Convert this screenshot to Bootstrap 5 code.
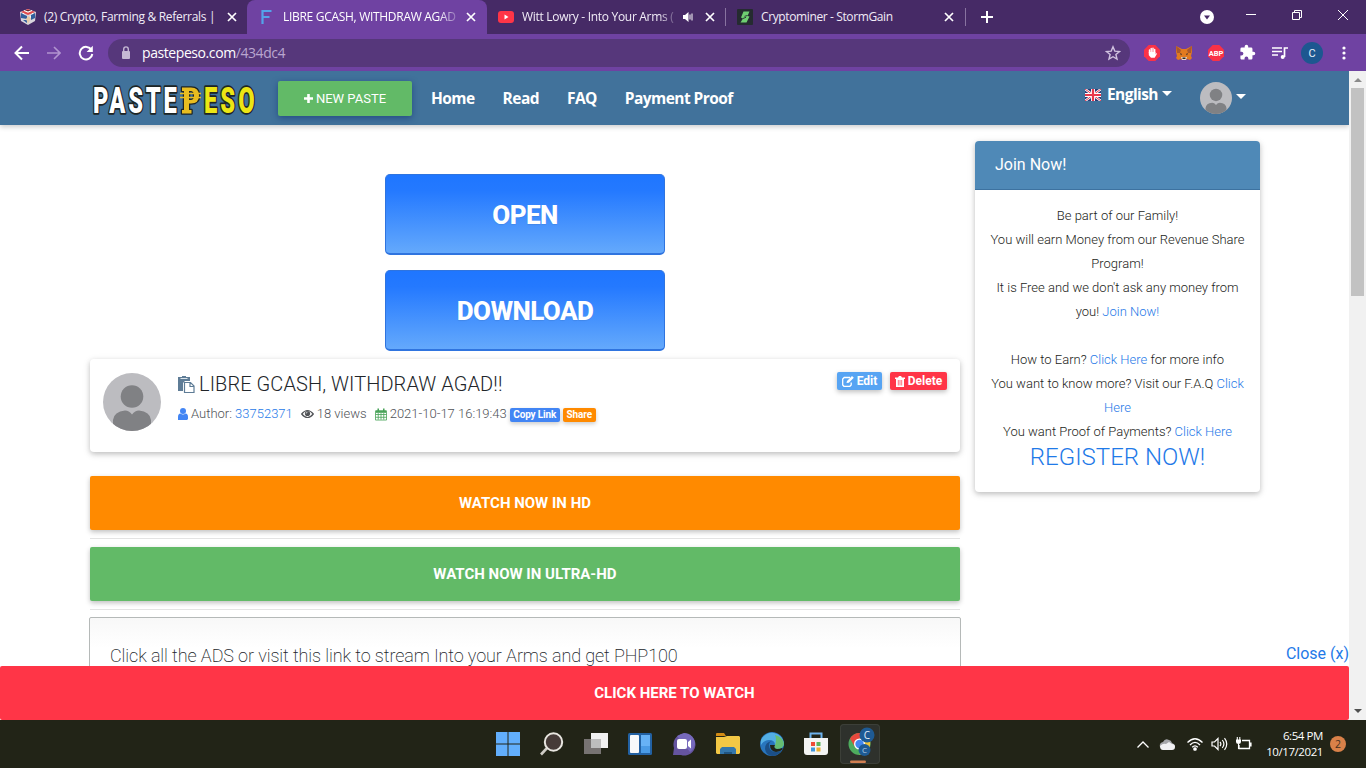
<!DOCTYPE html>
<html lang="en">
<head>
  <meta charset="UTF-8" />
  <meta name="viewport" content="width=device-width, initial-scale=1.0"/>
  <title>LIBRE GCASH, WITHDRAW AGAD!! - PastePeso</title>
  <link href="https://cdn.jsdelivr.net/npm/bootstrap@5.3.2/dist/css/bootstrap.min.css" rel="stylesheet">
  <style>
    body {
      height: 768px;
      font-family: Roboto, "Liberation Sans", sans-serif;
      color: #212529;
      line-height: 1.5;
    }
    svg { display: block; flex: none; }
    a { color: #1f7ae8; text-decoration: none; }
    .ui-font { font-family: "Open Sans", "Noto Sans", sans-serif; }

    /* browser window */
    .titlebar { height: 34px; background: #462a66; color: #f1ecf7; font-size: 12px; }
    .tab { height: 34px; padding-left: 20px; }
    .tab span { margin-left: 8px; line-height: 34px; letter-spacing: -.3px; }
    .tab-fade { -webkit-mask-image: linear-gradient(90deg, #000 90%, rgba(0,0,0,.25)); mask-image: linear-gradient(90deg, #000 90%, rgba(0,0,0,.25)); }
    .tab.current { background: #6f42a2; color: #fff; border-radius: 8px 8px 0 0; }
    .tab.current span { letter-spacing: -.3px; }
    .tab-line { width: 1px; height: 18px; background: #8873a0; }
    .win-btn { width: 46px; height: 29px; }
    .toolbar { height: 37px; background: #6f42a2; padding: 0 6px; }
    .tool-cell { width: 32px; height: 35px; }
    .address { width: 1022px; height: 28px; background: #56377b; border-radius: 14px; margin-left: 6px; padding: 0 9px 0 10px; color: #fff; font-size: 14px; letter-spacing: -.42px; }
    .address .path { color: #b9a6cf; }

    /* page */
    .viewport { height: 649px; }
    .page { width: 1349px; background: #fff; }
    .site-nav { height: 54px; background: #41729b; padding: 0 0 0 92px; box-shadow: 0 2px 5px rgba(0,0,0,.2); position: relative; z-index: 2; }
    .site-logo { overflow: visible; }
    .btn-paste { width: 134px; height: 35px; margin: 1px 19px 0 22px; background: #62ba67; color: #fff; font-size: 13px; border-radius: 2px; box-shadow: 0 2px 6px rgba(10,40,110,.5); }
    .site-nav .menu-item { color: #fff; font-weight: 700; font-size: 15.5px; letter-spacing: -.56px; margin: 2px 28px 0 0; }
    .caret { border: 5px solid transparent; border-top-color: #fff; border-bottom: 0; }
    .big-btn { width: 280px; height: 81px; border: 1px solid #2f74df; border-bottom-width: 2px; border-radius: 5px; background: linear-gradient(#1f76ff, #2479ff 20%, #64a9fc); color: #fff; font-weight: 800; font-size: 26px; letter-spacing: -.6px; text-shadow: 0 1px 1px rgba(0,0,0,.08); padding-top: 2px; }
    .main-col { width: 870px; padding-top: 49px; }
    .soft { box-shadow: 0 2px 5px rgba(0,0,0,.18), 0 2px 8px rgba(0,0,0,.1); border-radius: 4px; }
    .paste-head { height: 93px; margin-top: 8px; padding: 13px 13px 0 13px; }
    .paste-title { font-size: 20px; font-weight: 350; line-height: 24px; letter-spacing: .08px; }
    .meta { font-size: 13px; font-weight: 300; color: #505357; line-height: 18px; margin-top: 9px; }
    .tag { height: 14px; line-height: 14px; font-size: 10px; font-weight: 700; color: #fff; border-radius: 2px; box-shadow: 0 2px 4px rgba(0,0,0,.2); letter-spacing: -.15px; }
    .act { height: 18px; font-size: 12px; font-weight: 700; color: #fff; border-radius: 2px; box-shadow: 0 2px 5px rgba(0,0,0,.25); }
    .bg-edit { background: #57a4f3; }
    .bg-del { background: #ff3547; }
    .bg-blue { background: #4285f4; }
    .bg-orange { background: #ff8a00; }
    .bg-green { background: #62ba67; }
    .wide-btn { height: 54px; color: #fff; font-size: 15px; font-weight: 700; border-radius: 2px; box-shadow: 0 2px 5px rgba(0,0,0,.25); }
    .rule { height: 1px; background: #e3e3e3; margin: 8px 0; }
    .content-box { height: 120px; margin: -1px -1px 0; border: 1px solid #b5b9b8; border-radius: 2px; background: linear-gradient(#f8f8f8, #fff 30px); padding: 24px 20px; font-size: 18px; font-weight: 200; letter-spacing: -.1px; }
    .side-col { width: 285px; margin-top: 16px; height: 351px; }
    .side-head { height: 49px; background: #4f89b7; border-bottom: 1px solid #3d72a0; border-radius: 4px 4px 0 0; color: #fff; font-size: 16px; padding: 12px 20px 0; }
    .side-text { font-size: 13px; line-height: 24px; padding-top: 14px; font-weight: 300; color: #1b1d20; }
    .side-text a { font-weight: 350; }
    .register { font-size: 24px; line-height: 28px; margin-top: -1px; }
    .close-link { right: 0; bottom: 53px; font-size: 16px; line-height: 26px; }
    .watch-bar { left: 0; bottom: 0; width: 1349px; height: 54px; background: #ff3547; color: #fff; font-size: 15px; font-weight: 700; border-radius: 2px; }
    .scroller { width: 17px; background: #f1f1f1; }
    .scroller .thumb { width: 13px; height: 208px; background: #c2c2c2; }
    .scroller .arrow-cell { height: 17px; }

    /* taskbar */
    .taskbar { height: 48px; background: #222417; }
    .task-icons { margin-left: 486px; }
    .task-icons > div { width: 44px; height: 48px; }
    .chrome-cell { background: #2e312c; border-radius: 4px; box-shadow: inset 0 0 0 1px #3c3f38; height: 40px !important; width: 40px !important; margin: 4px 0 0 2px; }
    .tray { padding-right: 20px; color: #fff; }
    .clock { font-size: 11.5px; line-height: 16px; width: 62px; letter-spacing: -.42px; margin-right: 7px; }
  </style>
</head>
<body class="d-flex flex-column overflow-hidden">

  <!-- SHARED ICONS -->
  <svg width="0" height="0" class="position-absolute">
    <symbol id="x" viewBox="0 0 10 10"><path d="M1 1l8 8M9 1L1 9" stroke="#fff" stroke-width="1.7"/></symbol>
    <symbol id="avatar" viewBox="0 0 58 58">
      <clipPath id="round"><circle cx="29" cy="29" r="29"/></clipPath>
      <g clip-path="url(#round)">
        <rect width="58" height="58" fill="#bcbcc0"/>
        <circle cx="29" cy="23.500" r="11.300" fill="#808184"/>
        <path d="M10 58V47q1-8.500 12-9.500 4 0 7 4 3-4 7-4 11 1 12 9.500v11z" fill="#808184"/>
      </g>
    </symbol>
  </svg>

  <!-- TAB STRIP -->
  <div class="titlebar ui-font d-flex flex-shrink-0 align-items-center">
    <div class="tab d-flex align-items-center" style="width:247px">
      <svg width="16" height="16" viewBox="0 0 16 16"><path d="M8 0l8 3-1 9-7 4-7-4L0 3z" fill="#d9d5dd"/><path d="M8 0l7 3-7 3-7-3z" fill="#e04a4c"/><path d="M4 1.500L8 3l4-1.500M3 4l3 5M13 4l-3 5" stroke="#fff" stroke-width="1.200"/><path d="M1 4l6 3v3L1 9zm14 0l-4 2v5l4-2zM3 11l4 3v-3z" fill="#315f9d"/><path d="M8 7l3 2-3 6-2-5z" fill="#e6c9a6"/></svg>
      <span class="text-nowrap">(2) Crypto, Farming &amp; Referrals |</span>
      <svg class="ms-auto" width="10" height="10" style="margin-right:10px"><use href="#x"/></svg>
    </div>
    <div class="tab current d-flex align-items-center" style="width:240px;padding-left:12px">
      <svg width="16" height="16" viewBox="0 0 16 16"><path d="M3.500 15V2h9M3.500 8h7" stroke="#54a3ea" stroke-width="2.200" fill="none"/></svg>
      <span class="text-nowrap tab-fade">LIBRE GCASH, WITHDRAW AGAD</span>
      <svg class="ms-auto" width="10" height="10" style="margin-right:11px"><use href="#x"/></svg>
    </div>
    <div class="tab d-flex align-items-center" style="width:238px;padding-left:11px">
      <svg width="16" height="16" viewBox="0 0 16 16"><rect y="2" width="16" height="12" rx="3" fill="#ff3547"/><path d="M6.500 5.500v5l4-2.500z" fill="#fff"/></svg>
      <span class="text-nowrap tab-fade" style="width:152px">Witt Lowry - Into Your Arms (</span>
      <svg width="12" height="12" viewBox="0 0 12 12" style="margin-left:8px"><path d="M1 4h2l3.500-3v10L3 8H1z" fill="#fff"/><path d="M8 3.500v5M10 2.500v7" stroke="#fff"/></svg>
      <svg class="ms-auto" width="10" height="10" style="margin-right:10px"><use href="#x"/></svg>
    </div>
    <div class="tab-line"></div>
    <div class="tab d-flex align-items-center" style="width:239px;padding-left:11px">
      <svg width="16" height="16" viewBox="0 0 16 16"><rect width="16" height="16" rx="1" fill="#252b30"/><path d="M6.500 2.500h6L10.500 7l2 .5-3 6h-6L6 9.500 4 8.500z" fill="#6fcf72"/><path d="M6 9.500l3-1.200M7.500 7.300l3-.8" stroke="#252b30" stroke-width=".9"/></svg>
      <span class="text-nowrap" style="letter-spacing:-.38px">Cryptominer - StormGain</span>
      <svg class="ms-auto" width="10" height="10" style="margin-right:11px"><use href="#x"/></svg>
    </div>
    <div class="tab-line"></div>
    <svg width="12" height="12" viewBox="0 0 12 12" style="margin-left:15px"><path d="M6 0v12M0 6h12" stroke="#fff" stroke-width="2"/></svg>
    <svg class="ms-auto" width="14" height="14" viewBox="0 0 14 14" style="margin-right:14px"><circle cx="7" cy="7" r="7" fill="#fff"/><path d="M4 5.500h6L7 9.500z" fill="#462a66"/></svg>
    <div class="win-btn d-flex align-items-center justify-content-center align-self-start"><svg width="10" height="10"><path d="M0 4.500h10" stroke="#fff"/></svg></div>
    <div class="win-btn d-flex align-items-center justify-content-center align-self-start"><svg width="10" height="10" fill="none" stroke="#fff"><path d="M.5 2.500h7v7h-7zM2.500 2V.5h7v7H8"/></svg></div>
    <div class="win-btn d-flex align-items-center justify-content-center align-self-start"><svg width="10" height="10" stroke="#fff"><path d="M0 0l10 10M10 0L0 10"/></svg></div>
  </div>

  <!-- ADDRESS BAR -->
  <div class="toolbar d-flex flex-shrink-0 align-items-center">
    <div class="tool-cell d-flex align-items-center justify-content-center"><svg width="16" height="16" fill="none" stroke="#fff" stroke-width="2"><path d="M15 8H2M8 1.500L1.500 8 8 14.500"/></svg></div>
    <div class="tool-cell d-flex align-items-center justify-content-center"><svg width="14" height="14" fill="none" stroke="#b294d0" stroke-width="1.600"><path d="M0 7h12M7 1l6 6-6 6"/></svg></div>
    <div class="tool-cell d-flex align-items-center justify-content-center"><svg width="16" height="16" fill="none" stroke="#fff" stroke-width="2"><path d="M13.500 5A6.300 6.300 0 1 0 14.300 9"/><path d="M14.800.8V7H8.600z" fill="#fff" stroke="none"/></svg></div>
    <div class="address ui-font d-flex align-items-center">
      <svg width="16" height="16" viewBox="0 0 16 16"><rect x="4" y="6" width="8" height="8" rx="1" fill="#c5b8d4"/><path d="M5.700 6V4.200a2.300 2.300 0 0 1 4.600 0V6" fill="none" stroke="#c5b8d4" stroke-width="1.400"/></svg>
      <div style="margin-left:8px">pastepeso.com<span class="path">/434dc4</span></div>
      <svg class="ms-auto" width="16" height="16" viewBox="0 0 16 16" fill="none" stroke="#d0c2df" stroke-width="1.400"><path d="M8 1.800l1.800 4.300 4.700.4-3.600 3 1.100 4.600L8 11.700l-4 2.400 1.100-4.600-3.600-3 4.700-.4z"/></svg>
    </div>
    <div class="d-flex" style="margin-left:6px">
      <div class="tool-cell d-flex align-items-center justify-content-center"><svg width="16" height="16" viewBox="0 0 16 16"><path d="M4.700 0h6.600L16 4.700v6.600L11.300 16H4.700L0 11.300V4.700z" fill="#f93247"/><path d="M5.500 8V5M7.200 7.500V3.500M9 7.500V3.300M10.700 8V4.500" stroke="#fff" stroke-width="1.400" stroke-linecap="round"/><path d="M4.800 7h6.600v2.500L12 8l1 .8-2.300 4H7l-2.200-2.500z" fill="#fff"/></svg></div>
      <div class="tool-cell d-flex align-items-center justify-content-center"><svg width="16" height="16" viewBox="0 0 16 16"><path d="M0 1l6 3h4l6-3v6l-1 4 1 2-2 2-3-1-1 1H6l-1-1-3 1-2-2 1-2-1-4z" fill="#e27a1f"/><path d="M0 1l5 4-1 3H1zM16 1l-5 4 1 3h3z" fill="#a9592d"/><path d="M4 8l2 1-1 1.500zM12 8l-2 1 1 1.500z" fill="#42302c"/><path d="M5 12h6l-1 3H6z" fill="#ead5c5"/><path d="M6.500 12.500h3V14h-3z" fill="#27242b"/></svg></div>
      <div class="tool-cell d-flex align-items-center justify-content-center"><svg width="16" height="16" viewBox="0 0 16 16"><path d="M4.700 0h6.600L16 4.700v6.600L11.300 16H4.700L0 11.300V4.700z" fill="#f93247"/><text x="8" y="10.700" text-anchor="middle" font-size="7.500" font-weight="700" fill="#fff">ABP</text></svg></div>
      <div class="tool-cell d-flex align-items-center justify-content-center"><svg width="17" height="17" viewBox="0 0 24 24" fill="#fff" style="margin-right:1px"><path d="M20.500 11H19V7a2 2 0 0 0-2-2h-4V3.500a2.500 2.500 0 0 0-5 0V5H4a2 2 0 0 0-2 2v3.800h1.500a2.700 2.700 0 0 1 0 5.400H2V20c0 1.100.9 2 2 2h3.800v-1.500a2.700 2.700 0 0 1 5.400 0V22H17a2 2 0 0 0 2-2v-4h1.500a2.500 2.500 0 0 0 0-5z"/></svg></div>
      <div class="tool-cell d-flex align-items-center justify-content-center"><svg width="16" height="14" viewBox="0 0 16 14" stroke="#fff" fill="#fff"><path d="M0 2h10M0 5.500h10M0 9h6" stroke-width="1.500"/><path d="M12.500 11V2H16" fill="none" stroke-width="1.700"/><circle cx="10.700" cy="11" r="2" stroke="none"/></svg></div>
      <div class="tool-cell d-flex align-items-center justify-content-center"><svg width="22" height="22"><circle cx="11" cy="11" r="11" fill="#1d5790"/><text x="11" y="15" text-anchor="middle" font-size="11" fill="#e7f0f8">C</text></svg></div>
      <div class="tool-cell d-flex align-items-center justify-content-center"><svg width="4" height="14" fill="#fff"><circle cx="2" cy="2" r="1.600"/><circle cx="2" cy="7" r="1.600"/><circle cx="2" cy="12" r="1.600"/></svg></div>
    </div>
  </div>

  <!-- PAGE -->
  <div class="viewport d-flex flex-shrink-0">
    <div class="page position-relative overflow-hidden">

      <nav class="site-nav d-flex align-items-center">
        <svg class="site-logo" width="164" height="36" viewBox="0 0 164 36" font-weight="900" font-size="37" stroke="#1d2526" stroke-width="3.500" paint-order="stroke" stroke-linejoin="round">
          <text transform="translate(1 33) scale(.64 1)" textLength="131" fill="#fff">PASTE</text>
          <text transform="translate(112 33) scale(.64 1)" textLength="79" fill="#ece614">ESO</text>
          <path d="M90 7.500h9q8 0 8 8t-8 8h-2V30h2.500v3.500H90V30h2V11h-2zm7 3.500v9h1.500q3.500 0 3.500-4.500T98.500 11z" fill="#e8bd20" fill-rule="evenodd" stroke-width="2.500"/>
          <path d="M88 13.500h21M88 17.500h21" stroke="#e8bd20" stroke-width="1.600"/>
        </svg>
        <a class="btn-paste d-flex align-items-center justify-content-center" href="#">
          <svg width="9" height="9" style="margin-right:3px"><path d="M4.500 0v9M0 4.500h9" stroke="#fff" stroke-width="2.600"/></svg>NEW PASTE
        </a>
        <a class="menu-item ui-font" href="#">Home</a>
        <a class="menu-item ui-font" href="#">Read</a>
        <a class="menu-item ui-font" href="#">FAQ</a>
        <a class="menu-item ui-font" href="#">Payment Proof</a>
        <div class="d-flex align-items-center ms-auto" style="margin-right:28px;margin-bottom:7px">
          <svg width="16" height="12" viewBox="0 0 16 12" style="margin-top:1px"><rect width="16" height="12" fill="#293b75"/><path d="M0 0l16 12M16 0L0 12" stroke="#fff" stroke-width="2.400"/><path d="M0 0l16 12M16 0L0 12" stroke="#e8384c"/><path d="M8 0v12M0 6h16" stroke="#fff" stroke-width="4"/><path d="M8 0v12M0 6h16" stroke="#e8384c" stroke-width="2.200"/></svg>
          <span class="menu-item ui-font" style="margin:1px 4px 0 6px">English</span>
          <i class="caret" style="margin-top:-3px"></i>
        </div>
        <div class="d-flex align-items-center" style="margin-right:103px">
          <svg width="32" height="32"><use href="#avatar"/></svg>
          <i class="caret" style="margin:-4px 0 0 4px"></i>
        </div>
      </nav>

      <div class="d-flex align-items-start" style="margin-left:90px;gap:15px">
        <div class="main-col">
          <div class="d-flex flex-column align-items-center" style="gap:15px">
            <a class="big-btn d-flex align-items-center justify-content-center" href="#">OPEN</a>
            <a class="big-btn d-flex align-items-center justify-content-center" href="#">DOWNLOAD</a>
          </div>

          <div class="paste-head soft d-flex align-items-start">
            <svg width="58" height="58" style="margin-top:1px"><use href="#avatar"/></svg>
            <div style="margin-left:17px">
              <div class="paste-title d-flex align-items-center">
                <svg width="17" height="17" viewBox="0 0 17 17" style="margin-right:4px"><path d="M0 1h4V0h4v1h4v4H7L5 7v8H0z" fill="#5e7c96"/><path d="M2.500 2.500h7" stroke="#dde5eb"/><path d="M6.500 6.500h6l3.500 3.500v6.500H6.500zM12 6.500v4h4" fill="#fff" stroke="#5e7c96" stroke-width="1.200"/></svg>
                LIBRE GCASH, WITHDRAW AGAD!!
              </div>
              <div class="meta d-flex align-items-center">
                <svg width="10" height="12" viewBox="0 0 10 12" fill="#4285f4" style="margin-right:3px"><circle cx="5" cy="3" r="3"/><path d="M0 12V9q0-3.500 2.500-3.500Q5 7.500 7.500 5.500 10 5.500 10 9v2l-1 1z"/></svg>
                Author:&nbsp;<a href="#">33752371</a>
                <svg width="13" height="10" viewBox="0 0 13 10" style="margin:0 3px 0 8px"><path d="M.7 5Q6.500-2 12.300 5 6.500 12 .7 5z" fill="none" stroke="#505357" stroke-width="1.200"/><circle cx="6.500" cy="4.500" r="2.600" fill="#505357"/><path d="M5.200 4.500a1.300 1.300 0 0 1 1.300-1.300" stroke="#fff" stroke-width=".7" fill="none"/></svg>
                18 views
                <svg width="12" height="13" viewBox="0 0 13 13" style="margin:0 3px 0 8px" fill="none" stroke="#4aa35a"><path d="M.5 2.500h12v10H.5zM.5 6.500h12M.5 9.500h12M3.500 5v7M6.500 5v7M9.500 5v7" stroke-width=".9"/><path d="M1 3.500h11" stroke-width="2.400"/><path d="M3.500 0v3.500M9.500 0v3.500" stroke-width="1.700"/></svg>
                <span>2021-10-17 16:19:43</span>
                <span class="tag bg-blue text-center" style="width:50px;margin:2px 3px 0">Copy Link</span>
                <span class="tag bg-orange text-center" style="width:33px;margin-top:2px">Share</span>
              </div>
            </div>
            <div class="ms-auto d-flex" style="gap:8px">
              <a class="act bg-edit d-flex align-items-center justify-content-center" style="width:45px" href="#"><svg width="12" height="11" viewBox="0 0 12 11" fill="none" stroke="#fff" style="margin-right:3px"><path d="M8 1.500H2.200L.7 3v6l1.200 1.300h6L9.200 9V6.500" stroke-width="1.300"/><path d="M4.500 7l.5-2 5-5 1.800 1.800-5 5z" fill="#fff" stroke="none"/></svg>Edit</a>
              <a class="act bg-del d-flex align-items-center justify-content-center" style="width:57px" href="#"><svg width="10" height="11" viewBox="0 0 10 11" style="margin-right:3px"><path d="M0 1.500h3L4 0h2l1 1.500h3V3H9v8H1V3H0z" fill="#fff"/><path d="M3.300 4v5.500M5 4v5.500M6.700 4v5.500" stroke="#ff3547" stroke-width=".7"/></svg>Delete</a>
            </div>
          </div>

          <a class="wide-btn bg-orange d-flex align-items-center justify-content-center mt-4" href="#">WATCH NOW IN HD</a>
          <div class="rule"></div>
          <a class="wide-btn bg-green d-flex align-items-center justify-content-center" href="#">WATCH NOW IN ULTRA-HD</a>
          <div class="rule"></div>
          <div class="content-box">Click all the ADS or visit this link to stream Into your Arms and get PHP100</div>
        </div>

        <div class="side-col soft">
          <div class="side-head">Join Now!</div>
          <div class="side-text text-center text-nowrap">
            Be part of our Family!<br>
            You will earn Money from our Revenue Share<br>
            Program!<br>
            It is Free and we don't ask any money from<br>
            you! <a href="#">Join Now!</a><br>
            <br>
            How to Earn? <a href="#">Click Here</a> for more info<br>
            You want to know more? Visit our F.A.Q <a href="#">Click<br>
            Here</a><br>
            You want Proof of Payments? <a href="#">Click Here</a>
            <div class="register"><a href="#">REGISTER NOW!</a></div>
          </div>
        </div>
      </div>

      <a class="close-link position-absolute" href="#">Close (x)</a>
      <a class="watch-bar position-absolute d-flex align-items-center justify-content-center" href="#">CLICK HERE TO WATCH</a>
    </div>

    <div class="scroller d-flex flex-column align-items-center">
      <div class="arrow-cell d-flex align-items-center"><svg width="8" height="5"><path d="M0 5l4-4 4 4z" fill="#8b8b8b"/></svg></div>
      <div class="thumb"></div>
      <div class="arrow-cell d-flex align-items-center mt-auto"><svg width="8" height="5"><path d="M0 0l4 4 4-4z" fill="#505050"/></svg></div>
    </div>
  </div>

  <!-- TASKBAR -->
  <div class="taskbar ui-font d-flex flex-shrink-0">
    <div class="task-icons d-flex">
      <div class="d-flex align-items-center justify-content-center"><svg width="24" height="24" fill="#62aefc"><path d="M0 0h11.500v11.500H0zM12.500 0H24v11.500H12.500zM0 12.500h11.500V24H0zM12.500 12.500H24V24H12.500z"/></svg></div>
      <div class="d-flex align-items-center justify-content-center"><svg width="24" height="24"><path d="M8 15l-7 7.500" stroke="#cfccc6" stroke-width="2.600"/><circle cx="13.500" cy="10" r="8.700" fill="#463b38" stroke="#e8e6e0" stroke-width="2"/></svg></div>
      <div class="d-flex align-items-center justify-content-center"><svg width="24" height="24"><rect x="7" y="1" width="17" height="15" fill="#f1f1f1"/><rect y="7" width="17" height="15" fill="#777372"/><path d="M7 7h10v9H7z" fill="#bdbdbd"/></svg></div>
      <div class="d-flex align-items-center justify-content-center"><svg width="24" height="22"><rect width="24" height="22" rx="1.500" fill="#2261a3"/><rect x="2" y="2" width="9" height="18" rx="1" fill="#f7f9fb"/><rect x="13" y="2" width="9" height="11" fill="#67b2f6"/><rect x="13" y="13" width="9" height="7" fill="#4a9be6"/></svg></div>
      <div class="d-flex align-items-center justify-content-center"><svg width="24" height="24"><path d="M1 23l1-7A11 11 0 1 1 9 23z" fill="#65549f"/><path d="M12 1a11 11 0 0 1 11 11q-1 5-5 8L5 4z" fill="#7669bc"/><rect x="5" y="7" width="10" height="10" rx="2" fill="#fff"/><path d="M16 10l3-2.500v9L16 14z" fill="#fff"/></svg></div>
      <div class="d-flex align-items-center justify-content-center"><svg width="24" height="24"><path d="M0 2q0-1 1-1h7l2 3H0z" fill="#d28b15"/><path d="M0 5h8l3-1h12l1 1v16l-1 1H1l-1-1z" fill="#f3c845"/><path d="M4 22v-5l2-2h12l2 2v5z" fill="#3477ac"/><path d="M8 22v-2h8v2z" fill="#205582"/></svg></div>
      <div class="d-flex align-items-center justify-content-center"><svg width="24" height="24"><circle cx="12" cy="12" r="12" fill="#2875bd"/><path d="M1 8A12 12 0 0 1 24 12q-1 5-7 5-4-1-2-4 0-5-6-5-5 0-8 5z" fill="#53aee4"/><path d="M15 3q8 2 9 9-1 5-7 5-4-1-2-4 2-5 0-10z" fill="#65bd72"/><path d="M9 13q0 7 7 7 4 0 6-2-4 6-10 6-6-1-7-7 0-7 7-8-3 1-3 4z" fill="#1b4f87"/><path d="M15 13q-2 3 2 4 3 0 5-1l1 1q-3 3-7 3-6-1-6-7z" fill="#222417"/></svg></div>
      <div class="d-flex align-items-center justify-content-center"><svg width="24" height="24"><path d="M6.500 7V1.500h11V7" fill="none" stroke="#6eb2ec" stroke-width="2"/><path d="M0 6h24v14q0 3-3 3H3q-3 0-3-3z" fill="#f4f4f3"/><path d="M7 10h4v4H7z" fill="#ee4b37"/><path d="M12.500 10h4v4h-4z" fill="#5cb45e"/><path d="M7 15.500h4v4H7z" fill="#4096dc"/><path d="M12.500 15.500h4v4h-4z" fill="#edae2b"/></svg></div>
      <div class="chrome-cell"><svg width="40" height="40">
        <circle cx="19.500" cy="20" r="11" fill="#4eac5e"/><path d="M10 14.500a11 11 0 0 1 19 0H19.500L15 23z" fill="#e7483d"/><path d="M19.500 31L24 23V15h6q2 13-10.500 16z" fill="#efc33a"/><circle cx="19.500" cy="20" r="5.500" fill="#fff"/><circle cx="19.500" cy="20" r="4.200" fill="#4287ef"/>
        <circle cx="27" cy="11" r="7.500" fill="#1e5a94"/><text x="27" y="14.500" text-anchor="middle" font-size="10" fill="#e5edf5">C</text>
        <circle cx="24.500" cy="26" r="6" fill="#1e5a94"/><text x="24.500" y="28.700" text-anchor="middle" font-size="8" fill="#bcd0e2">C</text>
        <rect x="10" y="36.500" width="16" height="2.500" rx="1.200" fill="#d28052"/>
      </svg></div>
    </div>
    <div class="tray d-flex align-items-center ms-auto">
      <svg width="12" height="7" fill="none" stroke="#fff" stroke-width="1.300"><path d="M.5 6.500L6 1l5.500 5.500"/></svg>
      <svg width="16" height="11" style="margin-left:10px"><path d="M1 8q-1-4 3-5 2-4 6-2 2 0 3 3 3 1 3 4z" fill="#a5a6aa"/><path d="M1 7q3-3 6-2l3-2 3 2q3 0 3 3 0 3-3 3H4q-3 0-3-4z" fill="#f1f1f3"/></svg>
      <svg width="16" height="14" style="margin-left:12px" fill="none" stroke="#fff" stroke-width="1.300"><path d="M.5 5.500Q8-2 15.500 5.500M3 8Q8 2.700 13 8M5.200 10.300Q8 7.300 10.800 10.300"/><circle cx="8" cy="12" r="1.200" fill="#fff"/></svg>
      <svg width="17" height="14" style="margin-left:8px" fill="none" stroke="#fff" stroke-width="1.200"><path d="M1 5h2.500L7 1.500v11L3.500 9H1zM9 5q1.700 2 0 4M11.300 3q3.200 4 0 8M13.500 1.200q4.500 5.800 0 11.600"/></svg>
      <svg width="17" height="14" style="margin:0 9px 0 7px" fill="none" stroke="#fff" stroke-width="1.300"><path d="M7 3.500h7.500v8H4V8"/><path d="M15.800 5.500v4" stroke-width="1.600"/><path d="M1 2.500h5v2.500Q6 7 3.500 7T1 5z" fill="#fff" stroke="none"/><path d="M2.300 0v3M4.800 0v3M3.500 7v5" stroke-width="1.100"/></svg>
      <div class="clock text-end text-nowrap">6:54 PM<br>10/17/2021</div>
      <svg width="16" height="16"><circle cx="8" cy="8" r="8" fill="#d98149"/><text x="8" y="12" text-anchor="middle" font-size="10.500" fill="#46301f">2</text></svg>
    </div>
  </div>

  <script src="https://cdn.jsdelivr.net/npm/bootstrap@5.3.2/dist/js/bootstrap.bundle.min.js"></script>
</body>
</html>
